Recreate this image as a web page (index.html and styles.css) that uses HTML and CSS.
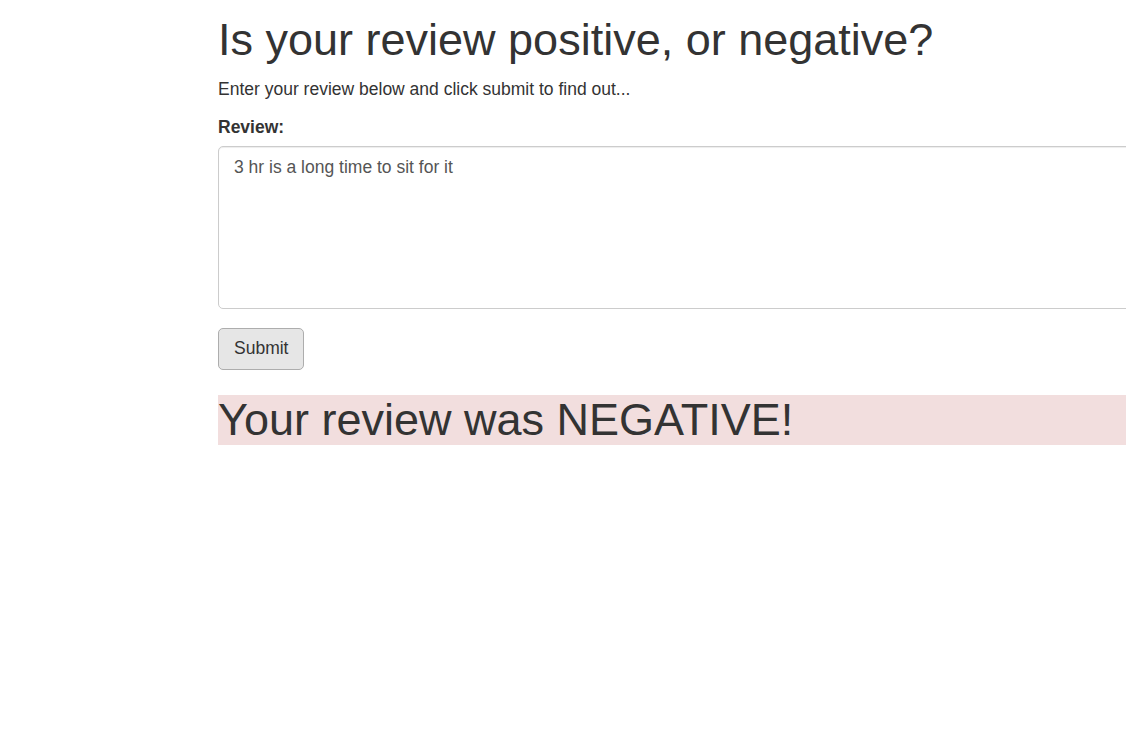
FILE: index.html
```html
<!DOCTYPE html>
<html lang="en">
<head>
<meta charset="utf-8">
<title>Review sentiment</title>
<link rel="stylesheet" href="styles.css">
</head>
<body>
<div class="page">
  <h1 class="title">Is your review positive, or negative?</h1>
  <p class="intro">Enter your review below and click submit to find out...</p>
  <form class="form">
    <div class="form-group">
      <label class="label" for="review">Review:</label>
      <textarea id="review" class="review-input">3 hr is a long time to sit for it</textarea>
    </div>
    <button type="button" class="btn">Submit</button>
  </form>
  <h1 class="result">Your review was NEGATIVE!</h1>
</div>
</body>
</html>
```

FILE: styles.css
```css
html, body {
  margin: 0;
  padding: 0;
  overflow: hidden;
  background: #fff;
}
body {
  font-family: "Liberation Sans", Arial, Helvetica, sans-serif;
  font-size: 17.5px;
  line-height: 25px;
  color: #333;
}
.page {
  padding-left: 218px;
  width: 940px;
}
.title {
  font-size: 45px;
  font-weight: 500;
  line-height: 1.1;
  margin: 15px 0 12.5px;
}
.intro {
  margin: 0 0 12.5px;
}
.form {
  margin: 0;
}
.form-group {
  margin-bottom: 18.75px;
}
.label {
  display: block;
  font-weight: bold;
  margin-bottom: 6.25px;
}
.review-input {
  display: block;
  box-sizing: border-box;
  width: 100%;
  height: 163px;
  padding: 8px 15px;
  font-family: inherit;
  font-size: 17.5px;
  line-height: 25px;
  color: #555;
  background: #fff;
  border: 1px solid #ccc;
  border-radius: 5px;
  box-shadow: inset 0 1px 1px rgba(0,0,0,.075);
  resize: none;
  margin: 0;
}
.btn {
  display: block;
  box-sizing: border-box;
  height: 42.5px;
  padding: 7.5px 15px;
  font-family: inherit;
  font-size: 17.5px;
  line-height: 25px;
  color: #333;
  background: #e6e6e6;
  border: 1px solid #adadad;
  border-radius: 5px;
  margin: 0;
}
.result {
  font-size: 45px;
  font-weight: 500;
  line-height: 1.1;
  margin: 25px 0 12.5px;
  background: #f2dede;
}
```
